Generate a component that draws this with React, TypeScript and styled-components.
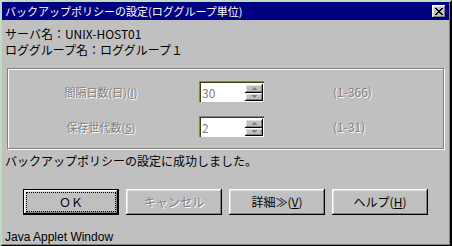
import React from "react";
import styled, { createGlobalStyle, css } from "styled-components";

const GlobalStyle = createGlobalStyle`
  html, body {
    margin: 0;
    padding: 0;
    background: #c0c0c0;
  }
`;

const uiFont = `"Noto Sans CJK JP", "Noto Sans", sans-serif`;

const raised = css`
  box-shadow:
    inset -1px -1px 0 #000,
    inset 1px 1px 0 #ffffff,
    inset -2px -2px 0 #808080,
    inset 2px 2px 0 #dfdfdf;
`;

const disabledText = css`
  color: #808080;
  text-shadow: 1px 1px 0 #ffffff;
`;

export default function App() {
  return (
    <>
      <GlobalStyle />
      <Window>
        <TitleBar>
          <Title>バックアップポリシーの設定(ロググループ単位)</Title>
          <CloseButton aria-label="閉じる">
            <svg width="8" height="7" viewBox="0 0 8 7" shapeRendering="crispEdges">
              <path
                d="M0 0h2v1h-2zM6 0h2v1h-2zM1 1h2v1h-2zM5 1h2v1h-2zM2 2h4v1h-4zM3 3h2v1h-2zM2 4h4v1h-4zM1 5h2v1h-2zM5 5h2v1h-2zM0 6h2v1h-2zM6 6h2v1h-2z"
                fill="#000"
              />
            </svg>
          </CloseButton>
        </TitleBar>

        <Body>
          <InfoLine>サーバ名：UNIX-HOST01</InfoLine>
          <InfoLine>ロググループ名：ロググループ１</InfoLine>

          <GroupBox>
            <FieldRow>
              <FieldLabel>
                間隔日数(日)(<u>I</u>)
              </FieldLabel>
              <SpinField value="30" />
              <RangeLabel>(1-366)</RangeLabel>
            </FieldRow>
            <FieldRow>
              <FieldLabel>
                保存世代数(<u>S</u>)
              </FieldLabel>
              <SpinField value="2" />
              <RangeLabel>(1-31)</RangeLabel>
            </FieldRow>
          </GroupBox>

          <Message>バックアップポリシーの設定に成功しました。</Message>

          <ButtonRow>
            <PushButton $default>
              <ButtonFace $focused>ＯＫ</ButtonFace>
            </PushButton>
            <PushButton disabled>
              <ButtonFace>キャンセル</ButtonFace>
            </PushButton>
            <PushButton>
              <ButtonFace>
                詳細≫(<u>V</u>)
              </ButtonFace>
            </PushButton>
            <PushButton>
              <ButtonFace>
                ヘルプ(<u>H</u>)
              </ButtonFace>
            </PushButton>
          </ButtonRow>

          <StatusText>Java Applet Window</StatusText>
        </Body>
      </Window>
    </>
  );
}

const SpinField = ({ value }: { value: string }) => (
  <Field>
    <FieldValue>{value}</FieldValue>
    <Spinner>
      <SpinButton>
        <svg width="5" height="3" viewBox="0 0 5 3">
          <path d="M2 0h1v1h1v1h1v1h-5v-1h1v-1h1z" fill="#808080" />
        </svg>
      </SpinButton>
      <SpinButton>
        <svg width="5" height="3" viewBox="0 0 5 3">
          <path d="M0 0h5v1h-1v1h-1v1h-1v-1h-1v-1h-1z" fill="#808080" />
        </svg>
      </SpinButton>
    </Spinner>
  </Field>
);

const Window = styled.div`
  width: 452px;
  height: 246px;
  box-sizing: border-box;
  overflow: hidden;
  background: #c0c0c0;
  border-top: 2px solid #c0dcc0;
  border-left: 2px solid #c0dcc0;
  border-right: 2px solid #000;
  border-bottom: 1px solid #000;
  box-shadow: inset -1px -1px 0 #808080;
  font-family: ${uiFont};
  font-size: 12px;
  display: flex;
  flex-direction: column;
`;

const TitleBar = styled.div`
  height: 18px;
  margin-right: 1px;
  background: #000080;
  display: flex;
  align-items: center;
  justify-content: space-between;
  padding: 0 3px 0 3px;
`;

const Title = styled.span`
  color: #fff;
  font-size: 11px;
  line-height: 14px;
  white-space: nowrap;
`;

const CloseButton = styled.button`
  width: 14px;
  height: 13px;
  padding: 0;
  border: none;
  background: #c0c0c0;
  display: flex;
  align-items: center;
  justify-content: center;
  ${raised};
`;

const Body = styled.div`
  display: flex;
  flex-direction: column;
  padding-top: 6px;
  padding-right: 1px;
`;

const InfoLine = styled.div`
  line-height: 16px;
  padding-left: 3px;
  color: #000;
  white-space: nowrap;
`;

const GroupBox = styled.div`
  margin: 10px 5px 0 5px;
  height: 81px;
  box-sizing: border-box;
  border: 1px solid #808080;
  box-shadow: inset 1px 1px 0 #fff, 1px 1px 0 #fff;
  padding-top: 12px;
  display: flex;
  flex-direction: column;
  gap: 14px;
`;

const FieldRow = styled.div`
  display: grid;
  grid-template-columns: 186px 65px 1fr;
  column-gap: 5px;
  align-items: center;
  height: 21px;
`;

const FieldLabel = styled.span`
  text-align: center;
  white-space: nowrap;
  font-size: 11px;
  ${disabledText};
`;

const RangeLabel = styled.span`
  padding-left: 64px;
  font-size: 12px;
  white-space: nowrap;
  ${disabledText};
`;

const Field = styled.div`
  height: 21px;
  box-sizing: border-box;
  background: #fff;
  border-top: 1px solid #808080;
  border-left: 1px solid #808080;
  box-shadow: inset 1px 1px 0 #404000;
  display: flex;
  align-items: center;
  justify-content: space-between;
  padding: 2px 1px 1px 2px;
`;

const FieldValue = styled.span`
  color: #808080;
  font-size: 12px;
  line-height: 16px;
`;

const Spinner = styled.div`
  display: flex;
  flex-direction: column;
  width: 18px;
  height: 17px;
`;

const SpinButton = styled.div`
  flex: 1;
  background: #c0c0c0;
  display: flex;
  align-items: center;
  justify-content: center;
  ${raised};
`;

const Message = styled.div`
  margin-top: 4px;
  padding-left: 3px;
  line-height: 16px;
  color: #000;
  white-space: nowrap;
`;

const ButtonRow = styled.div`
  display: flex;
  gap: 7px;
  padding-left: 21px;
  margin-top: 20px;
`;

const PushButton = styled.button<{ $default?: boolean }>`
  width: 96px;
  height: 26px;
  box-sizing: border-box;
  padding: 3px;
  margin: 0;
  background: #c0c0c0;
  font-family: ${uiFont};
  font-size: 12px;
  color: #000;
  display: flex;
  border: ${(p) => (p.$default ? "1px solid #000" : "none")};
  ${raised};
  ${(p) => p.$default && css`padding: 2px;`}

  &:disabled {
    ${disabledText};
  }
`;

const ButtonFace = styled.span<{ $focused?: boolean }>`
  flex: 1;
  display: flex;
  align-items: center;
  justify-content: center;
  white-space: nowrap;
  line-height: 16px;
  border: 1px dotted ${(p) => (p.$focused ? "#000" : "transparent")};
`;

const StatusText = styled.div`
  margin-top: 14px;
  padding-left: 3px;
  font-family: "Liberation Sans", Arial, sans-serif;
  font-size: 12px;
  line-height: 16px;
  color: #000;
`;
